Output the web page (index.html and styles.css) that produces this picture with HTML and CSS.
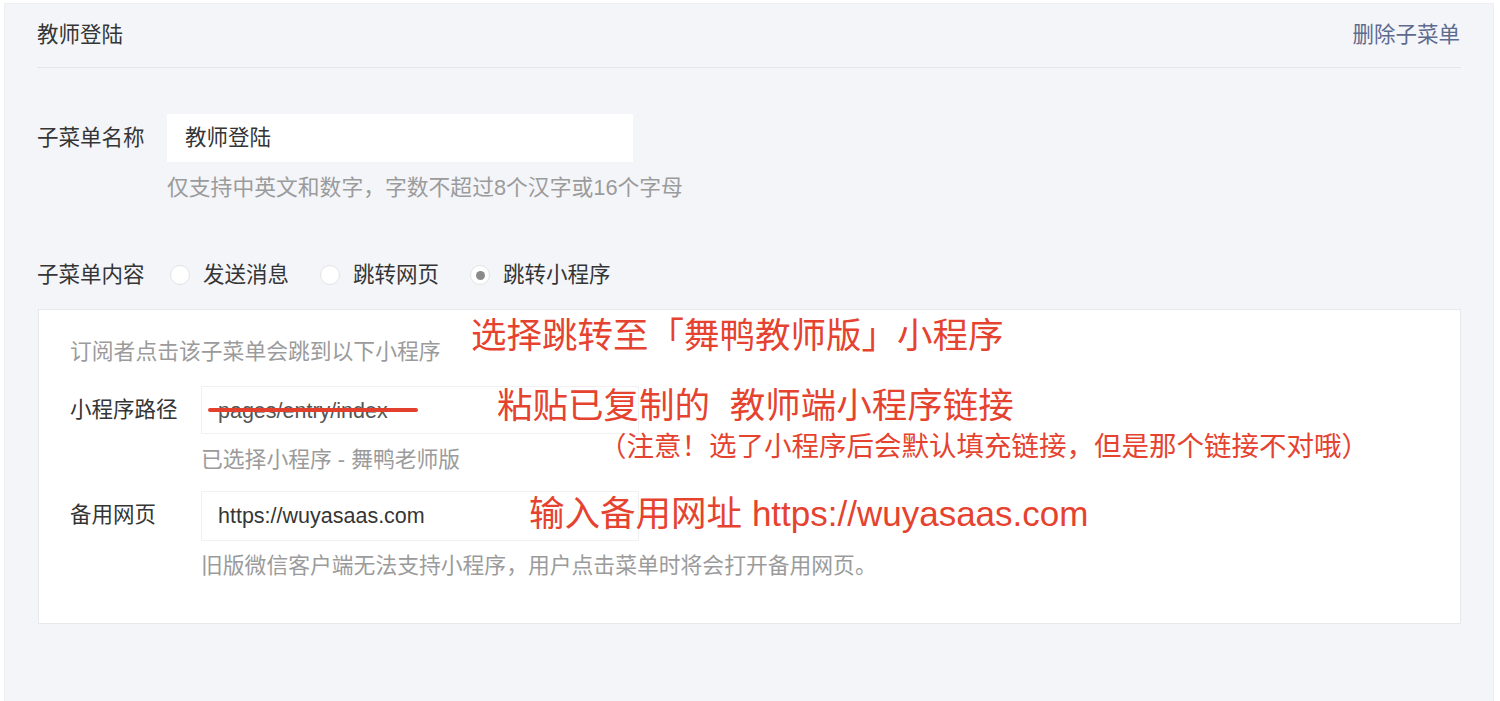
FILE: index.html
```html
<!DOCTYPE html>
<html lang="zh-CN">
<head>
<meta charset="utf-8">
<title>教师登陆</title>
<link rel="stylesheet" href="styles.css">
</head>
<body>
<div class="page">
  <div class="panel">
    <div class="panel-head">
      <span class="panel-title">教师登陆</span>
      <a class="panel-action">删除子菜单</a>
    </div>
    <div class="form">
      <div class="field">
        <div class="label">子菜单名称</div>
        <div class="control">
          <div class="input input-name">教师登陆</div>
          <div class="hint">仅支持中英文和数字，字数不超过8个汉字或16个字母</div>
        </div>
      </div>
      <div class="field field-radio">
        <div class="label">子菜单内容</div>
        <div class="radios">
          <div class="radio"><span class="dot"></span><span>发送消息</span></div>
          <div class="radio"><span class="dot"></span><span>跳转网页</span></div>
          <div class="radio"><span class="dot checked"></span><span>跳转小程序</span></div>
        </div>
      </div>
      <div class="box">
        <div class="box-desc">订阅者点击该子菜单会跳到以下小程序</div>
        <div class="field field-inner">
          <div class="label label-inner">小程序路径</div>
          <div class="control">
            <div class="input input-path"><span class="path-text">pages/entry/index</span></div>
            <div class="hint">已选择小程序 - 舞鸭老师版</div>
          </div>
        </div>
        <div class="field field-inner field-gap">
          <div class="label label-inner">备用网页</div>
          <div class="control">
            <div class="input input-path input-tall">https://wuyasaas.com</div>
            <div class="hint hint-tight">旧版微信客户端无法支持小程序，用户点击菜单时将会打开备用网页。</div>
          </div>
        </div>
      </div>
    </div>
  </div>

  <span class="strike"></span>
  <div class="note note-1">选择跳转至「舞鸭教师版」小程序</div>
  <div class="note note-2">粘贴已复制的&nbsp;&nbsp;教师端小程序链接</div>
  <div class="note note-3">（注意！选了小程序后会默认填充链接，但是那个链接不对哦）</div>
  <div class="note note-4">输入备用网址 <span class="note-url">https://wuyasaas.com</span></div>
</div>
</body>
</html>
```

FILE: styles.css
```css
html, body {
  margin: 0;
  padding: 0;
  background: #ffffff;
  height: 701px;
  overflow: hidden;
}

body {
  font-family: "Liberation Sans", "Noto Sans CJK SC", sans-serif;
  color: #353535;
  font-size: 21.5px;
}

.page {
  position: relative;
  width: 1500px;
  height: 701px;
  padding-top: 3px;
  padding-left: 4px;
  box-sizing: border-box;
}

.panel {
  width: 1490px;
  height: 720px;
  box-sizing: border-box;
  background: #f4f5f9;
  border: 1px solid #eceef2;
  padding: 0 32px;
}

.panel-head {
  height: 64px;
  box-sizing: border-box;
  padding-bottom: 6px;
  display: flex;
  align-items: center;
  justify-content: space-between;
  border-bottom: 1px solid #e4e6eb;
}

.panel-title {
  color: #353535;
}

.panel-action {
  color: #5d6b8f;
  margin-right: 1px;
}

.form {
  padding-top: 46px;
}

.field {
  display: flex;
  align-items: flex-start;
}

.label {
  width: 130px;
  flex: none;
  line-height: 48px;
  color: #353535;
}

.control {
  display: flex;
  flex-direction: column;
}

.input {
  height: 48px;
  line-height: 48px;
  background: #ffffff;
  box-sizing: border-box;
  color: #353535;
}

.input-name {
  width: 466px;
  padding-left: 18px;
}

.hint {
  margin-top: 11px;
  line-height: 30px;
  color: #9b9b9b;
  font-size: 21.8px;
}

.hint-tight {
  margin-top: 10px;
}

.field-radio {
  margin-top: 57px;
  align-items: center;
}

.field-radio .label {
  line-height: 30px;
}

.radios {
  display: flex;
  align-items: center;
  gap: 31px;
  margin-left: 3px;
  line-height: 30px;
}

.radio {
  display: flex;
  align-items: center;
  gap: 13px;
}

.dot {
  width: 20px;
  height: 20px;
  box-sizing: border-box;
  border-radius: 50%;
  background: #ffffff;
  border: 1px solid #e3e3e6;
  display: flex;
  align-items: center;
  justify-content: center;
}

.dot.checked::after {
  content: "";
  width: 9px;
  height: 9px;
  border-radius: 50%;
  background: #8a8a8a;
}

.box {
  margin-top: 19px;
  margin-left: 1px;
  width: 1423px;
  box-sizing: border-box;
  background: #ffffff;
  border: 1px solid #e6e8ec;
  padding: 27px 0 42px 31px;
}

.box-desc {
  line-height: 30px;
  color: #9b9b9b;
  font-size: 21.8px;
}

.field-inner {
  margin-top: 19px;
}

.field-gap {
  margin-top: 16px;
}

.label-inner {
  width: 131px;
}

.input-path {
  width: 438px;
  padding-left: 16px;
  border: 1px solid #f0f1f3;
}

.input-tall {
  height: 50px;
  line-height: 48px;
}

.path-text {
  color: #555555;
}

.strike {
  position: absolute;
  left: 208px;
  top: 408px;
  width: 210px;
  height: 4px;
  border-radius: 2px;
  background: #e2402c;
}

.note {
  position: absolute;
  color: #e5432f;
  white-space: nowrap;
  line-height: 40px;
  font-size: 35.5px;
}

.note-1 {
  left: 471px;
  top: 316px;
}

.note-2 {
  left: 497px;
  top: 386px;
}

.note-3 {
  left: 599px;
  top: 431px;
  font-size: 27.5px;
  line-height: 32px;
}

.note-4 {
  left: 529px;
  top: 494px;
}

.note-url {
  font-size: 35px;
}
```
